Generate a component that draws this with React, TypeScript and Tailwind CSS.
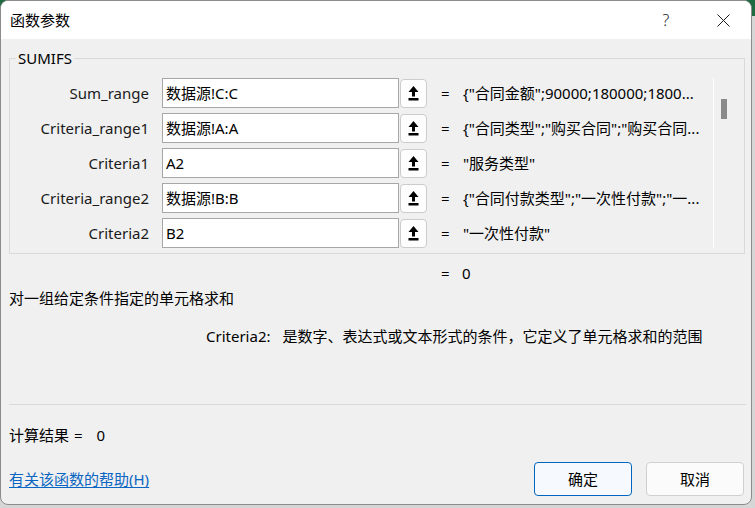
import React from 'react';

const rows = [
  { label: 'Sum_range', ref: '数据源!C:C', value: '{"合同金额";90000;180000;1800...' },
  { label: 'Criteria_range1', ref: '数据源!A:A', value: '{"合同类型";"购买合同";"购买合同...' },
  { label: 'Criteria1', ref: 'A2', value: '"服务类型"' },
  { label: 'Criteria_range2', ref: '数据源!B:B', value: '{"合同付款类型";"一次性付款";"一...' },
  { label: 'Criteria2', ref: 'B2', value: '"一次性付款"' },
];

function CollapseIcon() {
  return (
    <svg width="11" height="15" viewBox="0 0 11 15" className="block">
      <path d="M5.5 0 L10.5 6 L7 6 L7 10.5 L4 10.5 L4 6 L0.5 6 Z" fill="#000" />
      <rect x="0.5" y="12" width="10" height="2.5" fill="#000" />
    </svg>
  );
}

function ArgRow({ label, refText, value }: { label: string; refText: string; value: string }) {
  return (
    <div className="flex h-[30px] items-center">
      <div className="w-[139px] text-right text-[15px] text-[#1a1a1a]">{label}</div>
      <div className="ml-[13px] flex h-[30px] items-center">
        <div className="flex h-[30px] w-[237px] items-center border border-[#a7a7a7] bg-white pl-[3px] text-[15px] text-black">
          {refText}
        </div>
        <button className="ml-[1px] grid h-[29px] w-[27px] place-items-center rounded-[4px] border border-[#cccccc] bg-[#fdfdfd]">
          <CollapseIcon />
        </button>
      </div>
      <div className="w-[36px] pl-[14px] text-[15px]">=</div>
      <div className="w-[244px] overflow-hidden whitespace-nowrap text-[15px] text-black">{value}</div>
    </div>
  );
}

export default function App() {
  return (
    <div className="h-[508px] w-[755px] bg-[linear-gradient(#1e6b41_0,#1e6b41_16px,#d6d6d6_16px)] font-['Noto_Sans','Noto_Sans_CJK_SC',sans-serif] leading-[20px] text-black">
      <div className="flex h-[505px] w-[752px] flex-col overflow-hidden rounded-[8px] border border-[#8c8c8c] bg-[#f0f0f0]">
        {/* title bar */}
        <div className="flex h-[38px] shrink-0 items-center bg-white pl-[9px] pr-[5px]">
          <span className="text-[15px]">函数参数</span>
          <div className="ml-auto grid h-[38px] w-[46px] place-items-center text-[16px] font-light text-[#1a1a1a]">?</div>
          <div className="ml-[11px] grid h-[38px] w-[46px] place-items-center">
            <svg width="13" height="13" viewBox="0 0 13 13">
              <path d="M0.5 0.5 L12.5 12.5 M12.5 0.5 L0.5 12.5" stroke="#1a1a1a" strokeWidth="1" />
            </svg>
          </div>
        </div>

        <div className="flex flex-1 flex-col pl-[8px] pr-[6px]">
          <fieldset className="mt-[9px] h-[206px] border border-[#d9d9d9] pt-[10px]">
            <legend className="ml-[6px] px-[2px] text-[15px] leading-[20px]">SUMIFS</legend>
            <div className="flex">
              <div className="flex w-[703px] flex-col gap-[5px]">
                {rows.map((r) => (
                  <ArgRow key={r.label} label={r.label} refText={r.ref} value={r.value} />
                ))}
              </div>
              <div className="h-[170px] w-[31px] border-l border-white">
                <div className="ml-[7px] mt-[21px] h-[20px] w-[6px] bg-[#8a8a8a]" />
              </div>
            </div>
          </fieldset>

          <div className="mt-[9px] flex h-[20px] pl-[432px] text-[15px]">
            <span className="w-[21px]">=</span>
            <span>0</span>
          </div>

          <div className="mt-[5px] h-[20px] text-[15px]">对一组给定条件指定的单元格求和</div>

          <div className="mt-[18px] flex h-[20px] pl-[197px] text-[15px]">
            <span>Criteria2:</span>
            <span className="ml-[12px]">是数字、表达式或文本形式的条件，它定义了单元格求和的范围</span>
          </div>

          <div className="mt-[58px] h-px w-[737px] bg-[#d9d9d9]" />

          <div className="mt-[20px] flex h-[20px] items-center text-[15px]">
            <span>计算结果</span>
            <span className="ml-[5px]">=</span>
            <span className="ml-[14px]">0</span>
          </div>

          <div className="mt-[17px] flex h-[34px] items-center">
            <a href="#" className="text-[15px] text-[#0a66c2] underline underline-offset-2">有关该函数的帮助(H)</a>
            <button className="ml-auto h-[34px] w-[98px] rounded-[4px] border border-[#0067c0] bg-[#f6f9fd] text-[15px]">确定</button>
            <button className="ml-[14px] mr-[1px] h-[34px] w-[98px] rounded-[4px] border border-[#d0d0d0] bg-[#fbfbfb] text-[15px]">取消</button>
          </div>
        </div>
      </div>
    </div>
  );
}
